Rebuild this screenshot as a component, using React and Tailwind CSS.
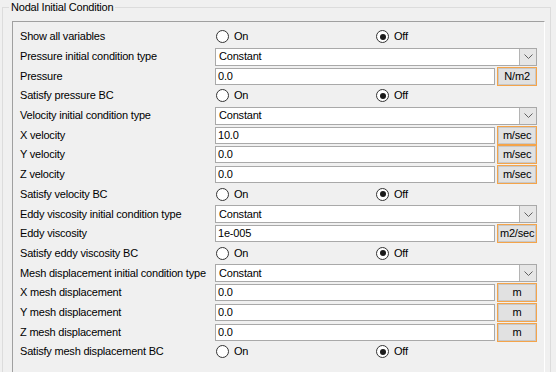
import React from 'react';

const rows = [
  { type: 'radio', label: 'Show all variables' },
  { type: 'combo', label: 'Pressure initial condition type', value: 'Constant' },
  { type: 'input', label: 'Pressure', value: '0.0', unit: 'N/m2' },
  { type: 'radio', label: 'Satisfy pressure BC' },
  { type: 'combo', label: 'Velocity initial condition type', value: 'Constant' },
  { type: 'input', label: 'X velocity', value: '10.0', unit: 'm/sec' },
  { type: 'input', label: 'Y velocity', value: '0.0', unit: 'm/sec' },
  { type: 'input', label: 'Z velocity', value: '0.0', unit: 'm/sec' },
  { type: 'radio', label: 'Satisfy velocity BC' },
  { type: 'combo', label: 'Eddy viscosity initial condition type', value: 'Constant' },
  { type: 'input', label: 'Eddy viscosity', value: '1e-005', unit: 'm2/sec' },
  { type: 'radio', label: 'Satisfy eddy viscosity BC' },
  { type: 'combo', label: 'Mesh displacement initial condition type', value: 'Constant' },
  { type: 'input', label: 'X mesh displacement', value: '0.0', unit: 'm' },
  { type: 'input', label: 'Y mesh displacement', value: '0.0', unit: 'm' },
  { type: 'input', label: 'Z mesh displacement', value: '0.0', unit: 'm' },
  { type: 'radio', label: 'Satisfy mesh displacement BC' },
];

const Radio = ({ checked, text }) => (
  <div className="flex items-center gap-[5px]">
    <span className="w-[13px] h-[13px] rounded-full border border-[#333333] bg-white flex items-center justify-center">
      {checked && <span className="w-[6px] h-[6px] rounded-full bg-[#1a1a1a]" />}
    </span>
    <span>{text}</span>
  </div>
);

const RadioPair = () => (
  <div className="flex items-center">
    <div className="w-[161px] pl-[1px]">
      <Radio text="On" />
    </div>
    <Radio checked text="Off" />
  </div>
);

const Combo = ({ value }) => (
  <div className="w-[322px] h-[18px] border border-[#a9a9a9] bg-white flex items-center">
    <span className="flex-1 pl-[3px]">{value}</span>
    <div className="w-[17px] h-[16px] bg-[#e6e6e6] border-l border-[#b4b4b4] flex items-center justify-center">
      <svg width="9" height="5" viewBox="0 0 9 5">
        <polyline points="0.5,0.5 4.5,4.5 8.5,0.5" fill="none" stroke="#606060" strokeWidth="1" />
      </svg>
    </div>
  </div>
);

const UnitInput = ({ value, unit }) => (
  <div className="flex items-center gap-[2px] w-[322px]">
    <div className="w-[281px] h-[17px] border border-[#a9a9a9] bg-white flex items-center pl-[2px]">
      {value}
    </div>
    <div className="w-[40px] h-[19px] border border-[#f4a44a] bg-[#e1e1e1] flex items-center justify-center">
      <div className="w-full h-full border border-[#c8c8c8] flex items-center justify-center">{unit}</div>
    </div>
  </div>
);

export default function App() {
  return (
    <div
      className="w-[556px] h-[372px] bg-[#f0f0f0] overflow-hidden text-black text-[11px] tracking-[-0.2px] leading-none"
      style={{ fontFamily: '"Liberation Sans", Arial, sans-serif' }}
    >
      <fieldset className="ml-[2px] w-[549px] border border-[#dcdcdc] pl-[9px] pr-[5px] pt-[7px] h-[400px]">
        <legend className="-ml-[3px] px-[2px] leading-[14px]">Nodal Initial Condition</legend>
        <div className="w-[533px] border-t border-l border-t-[#a0a0a0] border-l-[#a0a0a0] border-r border-r-white pl-[7px] pt-[5px] h-[380px]">
          {rows.map((r, i) => (
            <div key={i} className="flex items-center h-[19.7px]">
              <div className="w-[195px] whitespace-nowrap">{r.label}</div>
              {r.type === 'radio' && <RadioPair />}
              {r.type === 'combo' && <Combo value={r.value} />}
              {r.type === 'input' && <UnitInput value={r.value} unit={r.unit} />}
            </div>
          ))}
        </div>
      </fieldset>
    </div>
  );
}
